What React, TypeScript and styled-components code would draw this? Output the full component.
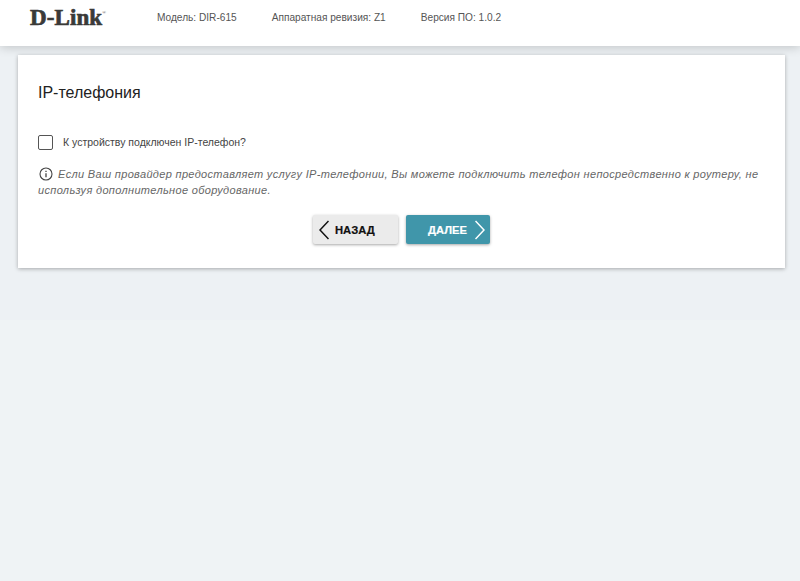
import React from 'react';
import styled, { createGlobalStyle } from 'styled-components';

const GlobalStyle = createGlobalStyle`
    html, body {
        margin: 0;
        padding: 0;
        background: linear-gradient(#edf1f4 320px, #eff3f5 320px);
    }
    body {
        font-family: "Liberation Sans", Arial, sans-serif;
    }
`;

const Page = styled.div`
    min-height: 581px;
    display: flex;
    flex-direction: column;
`;

const Header = styled.header`
    height: 46px;
    background-color: #fff;
    box-shadow: 0 1px 10px rgba(0, 0, 0, 0.2);
    display: flex;
    align-items: center;
    padding: 0 0 12px 30px;
    box-sizing: border-box;
`;

const Logo = styled.div`
    width: 127px;
    font-family: "Liberation Serif", serif;
    font-weight: 700;
    font-size: 23px;
    letter-spacing: 0.1px;
    color: #3a3a38;
    -webkit-text-stroke: 0.7px #3a3a38;
    line-height: 1;
    white-space: nowrap;

    sup {
        font-size: 5px;
        font-weight: 400;
        -webkit-text-stroke: 0;
        vertical-align: 11px;
        line-height: 0;
    }
`;

const InfoList = styled.div`
    display: flex;
    gap: 35px;
`;

const InfoItem = styled.span`
    font-size: 10.15px;
    color: #555;
`;

const Card = styled.main`
    margin: 9px 15px 0 18px;
    height: 213px;
    box-sizing: border-box;
    background-color: #fff;
    box-shadow: 0 1px 4px rgba(0, 0, 0, 0.3);
    padding: 28px 20px 0 20px;
`;

const Title = styled.h1`
    margin: 0;
    font-weight: 400;
    font-size: 16px;
    line-height: 20px;
    color: #222;
`;

const CheckRow = styled.label`
    display: flex;
    align-items: center;
    gap: 10px;
    margin-top: 31px;
    height: 16px;
`;

const CheckBox = styled.span`
    width: 13px;
    height: 13px;
    border: 1.5px solid #555;
    border-radius: 2px;
    background-color: #fff;
`;

const CheckLabel = styled.span`
    font-size: 10.5px;
    color: #444;
`;

const Hint = styled.p`
    margin: 16px 0 0 0;
    font-size: 11px;
    font-style: italic;
    line-height: 16px;
    color: #666;
    letter-spacing: 0.33px;

    svg {
        vertical-align: -3px;
        margin: 0 5px 0 1px;
    }
`;

const Actions = styled.div`
    display: flex;
    justify-content: center;
    gap: 8px;
    margin-top: 17px;
`;

const NavButton = styled.button<{ $primary?: boolean }>`
    width: ${props => (props.$primary ? '84px' : '85px')};
    height: 29px;
    border: none;
    border-radius: 2px;
    display: flex;
    align-items: center;
    justify-content: ${props => (props.$primary ? 'flex-end' : 'flex-start')};
    gap: ${props => (props.$primary ? '8px' : '6px')};
    font-family: inherit;
    font-weight: 700;
    font-size: 11.2px;
    -webkit-text-stroke: 0.2px currentColor;
    background-color: ${props => (props.$primary ? '#4096aa' : '#ebebeb')};
    color: ${props => (props.$primary ? '#fff' : '#111')};
    box-shadow: 0 1px 3px rgba(0, 0, 0, 0.35);
    padding: ${props => (props.$primary ? '0 5px 0 0' : '0 0 0 6px')};
`;

const InfoIcon = () => (
    <svg width="14" height="14" viewBox="0 0 14 14" fill="none" stroke="#444" strokeWidth="1.1">
        <circle cx="7" cy="7" r="6" />
        <path d="M7 6.2V10.2" strokeWidth="1.3" />
        <path d="M7 3.8V5" strokeWidth="1.3" />
    </svg>
);

const Chevron = ({ left, color }: { left?: boolean; color: string }) => (
    <svg width="10" height="20" viewBox="0 0 10 20" fill="none" stroke={color} strokeWidth="1.5">
        <path d={left ? 'M9.5 1L1 10L9.5 19' : 'M.5 1L9 10L.5 19'} />
    </svg>
);

export default function App() {
    return (
        <Page>
            <GlobalStyle />
            <Header>
                <Logo>D-Link<sup>®</sup></Logo>
                <InfoList>
                    <InfoItem>Модель: DIR-615</InfoItem>
                    <InfoItem>Аппаратная ревизия: Z1</InfoItem>
                    <InfoItem>Версия ПО: 1.0.2</InfoItem>
                </InfoList>
            </Header>
            <Card>
                <Title>IP-телефония</Title>
                <CheckRow>
                    <CheckBox />
                    <CheckLabel>К устройству подключен IP-телефон?</CheckLabel>
                </CheckRow>
                <Hint>
                    <InfoIcon />
                    Если Ваш провайдер предоставляет услугу IP-телефонии, Вы можете подключить телефон непосредственно к роутеру, не используя дополнительное оборудование.
                </Hint>
                <Actions>
                    <NavButton>
                        <Chevron left color="#111" />
                        НАЗАД
                    </NavButton>
                    <NavButton $primary>
                        ДАЛЕЕ
                        <Chevron color="#fff" />
                    </NavButton>
                </Actions>
            </Card>
        </Page>
    );
}
